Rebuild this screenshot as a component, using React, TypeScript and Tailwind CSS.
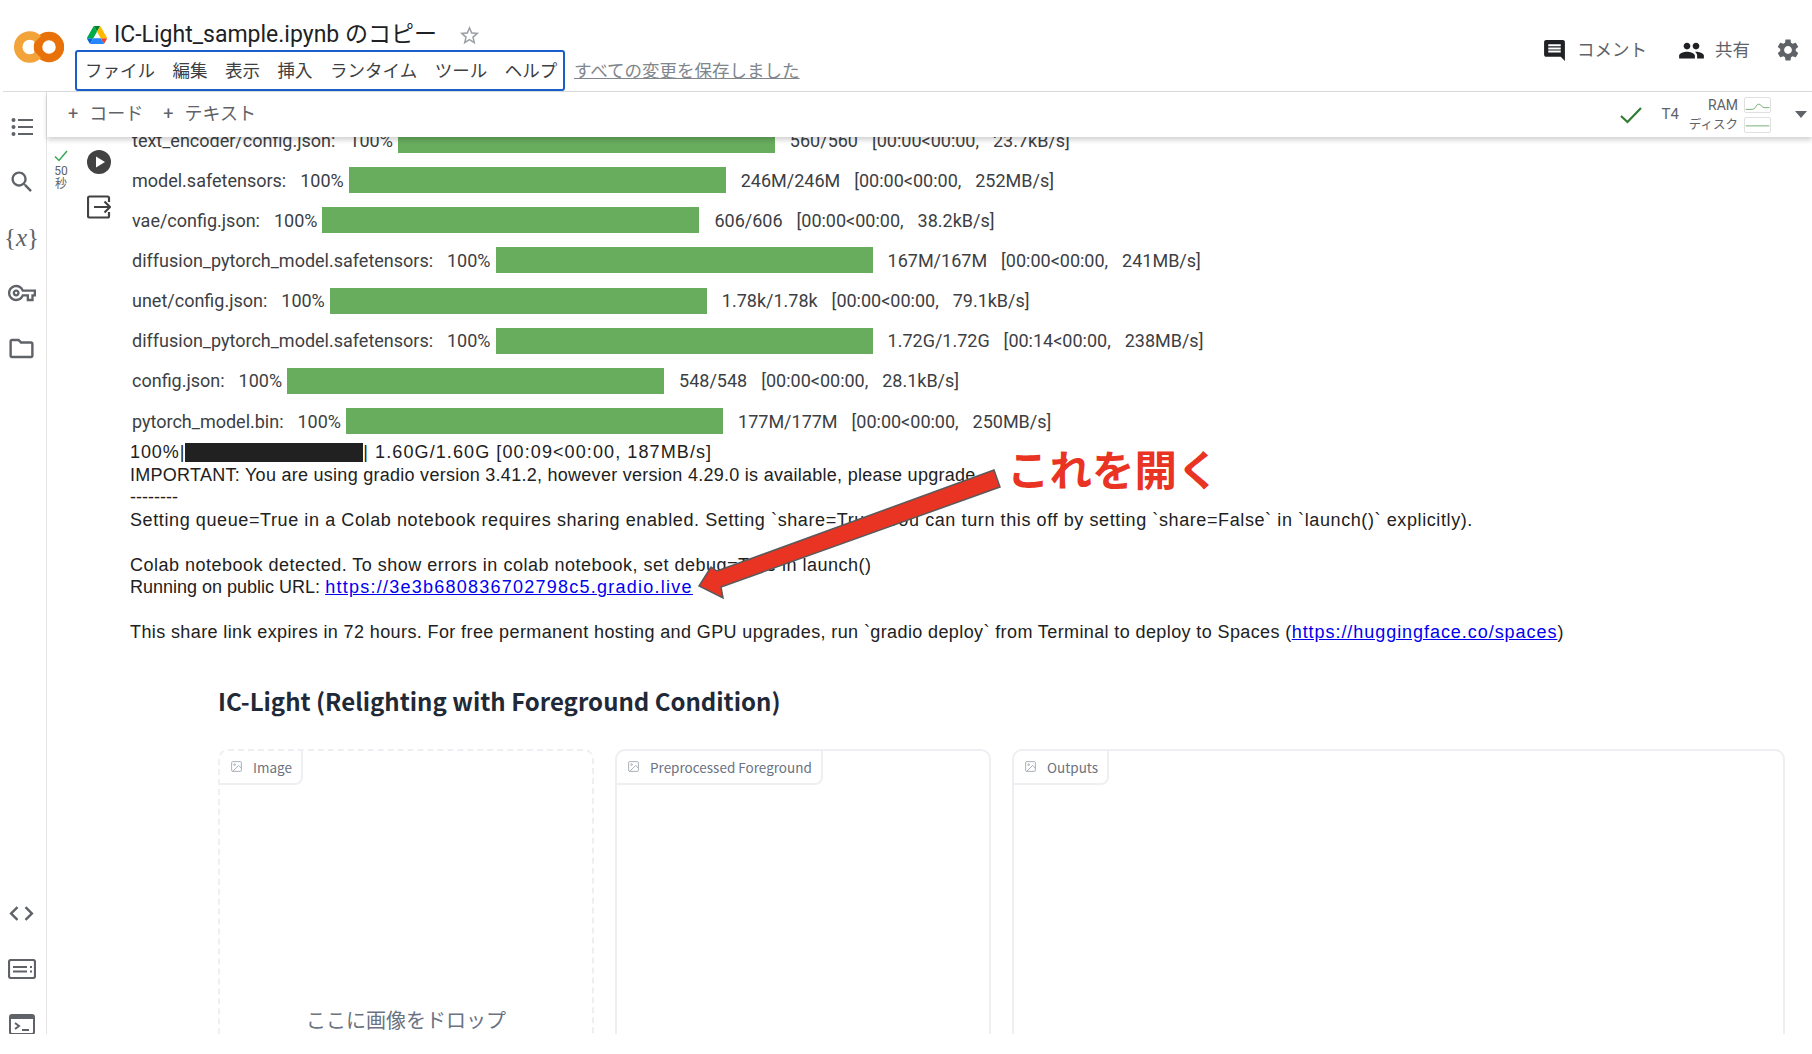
import type { ReactNode } from 'react';

const CJK = "font-['Roboto','Noto_Sans_CJK_JP',sans-serif]";

const rows = [
  { label: 'text_encoder/config.json:', stats: '560/560  [00:00<00:00,  23.7kB/s]' },
  { label: 'model.safetensors:', stats: '246M/246M  [00:00<00:00,  252MB/s]' },
  { label: 'vae/config.json:', stats: '606/606  [00:00<00:00,  38.2kB/s]' },
  { label: 'diffusion_pytorch_model.safetensors:', stats: '167M/167M  [00:00<00:00,  241MB/s]' },
  { label: 'unet/config.json:', stats: '1.78k/1.78k  [00:00<00:00,  79.1kB/s]' },
  { label: 'diffusion_pytorch_model.safetensors:', stats: '1.72G/1.72G  [00:14<00:00,  238MB/s]' },
  { label: 'config.json:', stats: '548/548  [00:00<00:00,  28.1kB/s]' },
  { label: 'pytorch_model.bin:', stats: '177M/177M  [00:00<00:00,  250MB/s]' },
];

function Icon({ d, className }: { d: string; className: string }) {
  return (
    <svg viewBox="0 0 24 24" fill="currentColor" className={className}>
      <path d={d} />
    </svg>
  );
}

function SideItem({ children }: { children: ReactNode }) {
  return <div className="flex h-[55.5px] shrink-0 items-center justify-center text-[#5f6368]">{children}</div>;
}

function ColabLogo() {
  return (
    <svg viewBox="0 0 50 32" className="h-[32px] w-[50px]" fill="none">
      <circle cx="35" cy="16" r="11" stroke="#e8710a" strokeWidth="8.5" />
      <path d="M24 8A11.5 11.5 0 1 0 24 24" stroke="#f2a33a" strokeWidth="8.5" />
    </svg>
  );
}

function DriveLogo() {
  return (
    <svg viewBox="0 0 87.3 78" className="h-[18px] w-[20px]">
      <path d="m6.6 66.85 3.85 6.65c.8 1.4 1.95 2.5 3.3 3.3l13.75-23.8h-27.5c0 1.55.4 3.1 1.2 4.5z" fill="#0066da" />
      <path d="m43.65 25-13.75-23.8c-1.35.8-2.5 1.9-3.3 3.3l-25.4 44a9.06 9.06 0 0 0 -1.2 4.5h27.5z" fill="#00ac47" />
      <path d="m73.55 76.8c1.35-.8 2.5-1.9 3.3-3.3l1.6-2.75 7.65-13.25c.8-1.4 1.2-2.95 1.2-4.5h-27.502l5.852 11.5z" fill="#ea4335" />
      <path d="m43.65 25 13.75-23.8c-1.35-.8-2.9-1.2-4.5-1.2h-18.5c-1.6 0-3.15.45-4.5 1.2z" fill="#00832d" />
      <path d="m59.8 53h-32.3l-13.75 23.8c1.35.8 2.9 1.2 4.5 1.2h50.8c1.6 0 3.15-.45 4.5-1.2z" fill="#2684fc" />
      <path d="m73.4 26.5-12.7-22c-.8-1.4-1.95-2.5-3.3-3.3l-13.75 23.8 16.15 28h27.45c0-1.55-.4-3.1-1.2-4.5z" fill="#ffba00" />
    </svg>
  );
}

function ImageGlyph() {
  return (
    <svg viewBox="0 0 24 24" fill="none" stroke="#9ca3af" strokeWidth="1.6" className="h-[13px] w-[13px] shrink-0">
      <rect x="3" y="3" width="18" height="18" rx="2" />
      <circle cx="8.5" cy="8.5" r="1.5" />
      <path d="M21 15l-5-5L5 21" />
    </svg>
  );
}

function Panel({ label, width, dashed, children }: { label: string; width: string; dashed?: boolean; children?: ReactNode }) {
  return (
    <div className={`relative h-[400px] shrink-0 rounded-t-[10px] border-2 border-[#eeeff3] ${dashed ? 'border-dashed' : ''} ${width}`}>
      <div className="flex h-[34px] w-fit items-center gap-[10px] rounded-br-[8px] border-r-2 border-b-2 border-[#eeeff3] pr-[9px] pl-[10px] font-['Noto_Sans_CJK_JP',sans-serif] text-[13.5px] text-[#6b7280]">
        <ImageGlyph />
        {label}
      </div>
      {children}
    </div>
  );
}

function Spark({ d }: { d: string }) {
  return (
    <svg viewBox="0 0 27 16" className="h-[16px] w-[27px] rounded-[2px] border border-[#e0e0e0]" fill="none">
      <path d={d} stroke="#66a766" strokeWidth="1" />
    </svg>
  );
}

function Header() {
  return (
    <div className="flex h-[92px] shrink-0 border-b border-[#dadce0] pl-[11px]">
      <div className="pt-[31px]">
        <ColabLogo />
      </div>
      <div className="flex min-w-0 flex-col pt-[20px] pl-[11px]">
        <div className="flex h-[30px] items-center pl-[12px]">
          <DriveLogo />
          <span className={`ml-[7px] text-[23px] text-[#202124] ${CJK}`}>IC-Light_sample.ipynb のコピー</span>
          <Icon
            className="ml-[21px] h-[23px] w-[23px] text-[#9aa0a6]"
            d="M22 9.24l-7.19-.62L12 2 9.19 8.63 2 9.24l5.46 4.73L5.82 21 12 17.27 18.18 21l-1.63-7.03L22 9.24zM12 15.4l-3.76 2.27 1-4.28-3.32-2.88 4.38-.38L12 6.1l1.71 4.04 4.38.38-3.32 2.88 1 4.28L12 15.4z"
          />
        </div>
        <div className="flex items-center">
          <div className={`flex h-[41px] w-[490px] items-center gap-[17.5px] rounded-[3px] border-2 border-[#1a5fc9] pt-[1px] pl-[8px] text-[17.5px] whitespace-nowrap text-[#3c4043] ${CJK}`}>
            <span>ファイル</span>
            <span>編集</span>
            <span>表示</span>
            <span>挿入</span>
            <span>ランタイム</span>
            <span>ツール</span>
            <span>ヘルプ</span>
          </div>
          <span className={`ml-[9px] pt-[2px] text-[17.5px] text-[#80868b] underline ${CJK}`}>すべての変更を保存しました</span>
        </div>
      </div>
      <div className={`ml-auto flex h-[100px] items-center pr-[11px] text-[17.5px] text-[#5f6368] ${CJK}`}>
        <Icon
          className="h-[25px] w-[25px] text-[#202124]"
          d="M21.99 4c0-1.1-.89-2-1.99-2H4c-1.1 0-2 .9-2 2v12c0 1.1.9 2 2 2h14l4 4-.01-18zM18 14H6v-2h12v2zm0-3H6V9h12v2zm0-3H6V6h12v2z"
        />
        <span className="ml-[10px]">コメント</span>
        <Icon
          className="ml-[31px] h-[27px] w-[27px] text-[#202124]"
          d="M16 11c1.66 0 2.99-1.34 2.99-3S17.66 5 16 5c-1.66 0-3 1.34-3 3s1.34 3 3 3zm-8 0c1.66 0 2.99-1.34 2.99-3S9.66 5 8 5C6.34 5 5 6.34 5 8s1.34 3 3 3zm0 2c-2.33 0-7 1.17-7 3.5V19h14v-2.5c0-2.33-4.67-3.5-7-3.5zm8 0c-.29 0-.62.02-.97.05 1.16.84 1.97 1.97 1.97 3.45V19h6v-2.5c0-2.33-4.67-3.5-7-3.5z"
        />
        <span className="ml-[10px]">共有</span>
        <Icon
          className="ml-[25px] h-[26px] w-[26px] text-[#5f6368]"
          d="M19.14 12.94c.04-.3.06-.61.06-.94 0-.32-.02-.64-.07-.94l2.03-1.58c.18-.14.23-.41.12-.61l-1.92-3.32c-.12-.22-.37-.29-.59-.22l-2.39.96c-.5-.38-1.03-.7-1.62-.94l-.36-2.54c-.04-.24-.24-.41-.48-.41h-3.84c-.24 0-.43.17-.47.41l-.36 2.54c-.59.24-1.13.57-1.62.94l-2.39-.96c-.22-.08-.47 0-.59.22L2.74 8.87c-.12.21-.08.47.12.61l2.03 1.58c-.05.3-.09.63-.09.94s.02.64.07.94l-2.03 1.58c-.18.14-.23.41-.12.61l1.92 3.32c.12.22.37.29.59.22l2.39-.96c.5.38 1.03.7 1.62.94l.36 2.54c.05.24.24.41.48.41h3.84c.24 0 .44-.17.47-.41l.36-2.54c.59-.24 1.13-.56 1.62-.94l2.39.96c.22.08.47 0 .59-.22l1.92-3.32c.12-.22.07-.47-.12-.61l-2.01-1.58zM12 15.6c-1.98 0-3.6-1.62-3.6-3.6s1.62-3.6 3.6-3.6 3.6 1.62 3.6 3.6-1.62 3.6-3.6 3.6z"
        />
      </div>
    </div>
  );
}

function Sidebar() {
  return (
    <div className="flex w-[44px] shrink-0 flex-col border-r border-[#e4e4e4] pt-[7px] pr-[6px]">
      <SideItem>
        <svg viewBox="0 0 24 24" className="h-[24px] w-[24px]" fill="currentColor">
          <circle cx="3.5" cy="5" r="2" />
          <circle cx="3.5" cy="12" r="2" />
          <circle cx="3.5" cy="19" r="2" />
          <rect x="8" y="4" width="15" height="2" />
          <rect x="8" y="11" width="15" height="2" />
          <rect x="8" y="18" width="15" height="2" />
        </svg>
      </SideItem>
      <SideItem>
        <Icon
          className="h-[28px] w-[28px]"
          d="M15.5 14h-.79l-.28-.27C15.41 12.59 16 11.11 16 9.5 16 5.91 13.09 3 9.5 3S3 5.91 3 9.5 5.91 16 9.5 16c1.61 0 3.09-.59 4.23-1.57l.27.28v.79l5 4.99L20.49 19l-4.99-5zm-6 0C7.01 14 5 11.99 5 9.5S7.01 5 9.5 5 14 7.01 14 9.5 11.99 14 9.5 14z"
        />
      </SideItem>
      <SideItem>
        <span className="font-['Liberation_Serif',serif] text-[25px] whitespace-nowrap">
          {'{'}
          <i>x</i>
          {'}'}
        </span>
      </SideItem>
      <SideItem>
        <Icon
          className="h-[28px] w-[28px]"
          d="M22 19h-6v-4h-2.68c-1.14 2.42-3.6 4-6.32 4-3.86 0-7-3.14-7-7s3.14-7 7-7c2.72 0 5.17 1.58 6.32 4H24v6h-2v4zm-4-2h2v-4h2v-2H11.94l-.23-.67C11.01 8.34 9.11 7 7 7c-2.76 0-5 2.24-5 5s2.24 5 5 5c2.11 0 4.01-1.34 4.71-3.33l.23-.67H18v4zM7 15c-1.65 0-3-1.35-3-3s1.35-3 3-3 3 1.35 3 3-1.35 3-3 3zm0-4c-.55 0-1 .45-1 1s.45 1 1 1 1-.45 1-1-.45-1-1-1z"
        />
      </SideItem>
      <SideItem>
        <Icon
          className="h-[29px] w-[29px]"
          d="M9.17 6l2 2H20v10H4V6h5.17M10 4H4c-1.1 0-1.99.9-1.99 2L2 18c0 1.1.9 2 2 2h16c1.1 0 2-.9 2-2V8c0-1.1-.9-2-2-2h-8l-2-2z"
        />
      </SideItem>
      <div className="mt-auto -mb-[18px] flex flex-col">
        <SideItem>
          <Icon className="h-[29px] w-[29px]" d="M9.4 16.6L4.8 12l4.6-4.6L8 6l-6 6 6 6 1.4-1.4zm5.2 0l4.6-4.6-4.6-4.6L16 6l6 6-6 6-1.4-1.4z" />
        </SideItem>
        <SideItem>
          <svg viewBox="0 0 28 20" className="h-[20px] w-[28px]" fill="none" stroke="currentColor" strokeWidth="2">
            <rect x="1" y="1" width="26" height="18" rx="2" strokeWidth="2.2" />
            <path d="M5 8h14M5 12.5h14M22 8h2M22 12.5h2" />
          </svg>
        </SideItem>
        <SideItem>
          <svg viewBox="0 0 26 21" className="h-[21px] w-[26px]" fill="none" stroke="currentColor" strokeWidth="2">
            <rect x="1" y="1" width="24" height="19" rx="2" />
            <path d="M1 3h24" strokeWidth="4" />
            <path d="M6 9l4 3-4 3M13 16h7" />
          </svg>
        </SideItem>
      </div>
    </div>
  );
}

function Toolbar() {
  return (
    <div className="relative z-10 flex h-[45px] shrink-0 items-center bg-white pr-[5px] shadow-[0_3px_5px_rgba(0,0,0,0.18)]">
      <div className={`flex items-center pb-[2px] pl-[21px] text-[18px] text-[#5f6368] ${CJK}`}>
        <span>+</span>
        <span className="ml-[11px]">コード</span>
        <span className="ml-[20px]">+</span>
        <span className="ml-[11px]">テキスト</span>
      </div>
      <div className="ml-auto flex items-center">
        <svg viewBox="0 0 24 24" className="h-[24px] w-[24px]" fill="none" stroke="#2e7d32" strokeWidth="2.2">
          <path d="M2 13l6.5 6L22 5" />
        </svg>
        <span className="ml-[18px] font-['Roboto',sans-serif] text-[15px] text-[#5f6368]">T4</span>
        <div className={`ml-[10px] flex flex-col items-end gap-[4px] text-[14px] leading-[16px] text-[#5f6368] ${CJK}`}>
          <div className="flex items-center gap-[6px]">
            RAM
            <Spark d="M0 13 H8 C11 13 12 7 15 7 C18 7 18 11 21 11 H27" />
          </div>
          <div className="flex items-center gap-[6px] text-[12.5px]">
            ディスク
            <Spark d="M0 9 H27" />
          </div>
        </div>
        <div className="ml-[24px] h-0 w-0 border-x-[6px] border-t-[7px] border-x-transparent border-t-[#5f6368]" />
      </div>
    </div>
  );
}

function Gutter() {
  return (
    <div className="flex w-[83px] shrink-0">
      <div className="flex w-[26px] flex-col items-center pt-[13px] pl-[2px] font-['Roboto','Noto_Sans_CJK_JP',sans-serif] text-[12px] leading-[13px] text-[#5f6368]">
        <svg viewBox="0 0 14 12" className="mb-[3px] h-[12px] w-[14px]" fill="none" stroke="#34a853" strokeWidth="1.5">
          <path d="M1 6.5l4 4L13 1" />
        </svg>
        <span>50</span>
        <span>秒</span>
      </div>
      <div className="flex flex-col items-start pt-[13px] pl-[14px]">
        <svg viewBox="0 0 24 24" className="h-[24px] w-[24px]">
          <circle cx="12" cy="12" r="12" fill="#424242" />
          <path d="M9 6.5l9 5.5-9 5.5z" fill="#fff" />
        </svg>
        <svg viewBox="0 0 24 24" className="mt-[21px] h-[24px] w-[24px]" fill="none" stroke="#424242" strokeWidth="2.2">
          <path d="M22 7V3a1.5 1.5 0 0 0-1.5-1.5h-18A1.5 1.5 0 0 0 1 3v18a1.5 1.5 0 0 0 1.5 1.5h18A1.5 1.5 0 0 0 22 21v-4" />
          <path d="M7 12h16M17.5 6.5L23 12l-5.5 5.5" />
        </svg>
      </div>
    </div>
  );
}

function Output() {
  return (
    <div className="min-w-0 flex-1 -mt-[17px]">
      <div className="pl-[2px] font-['Roboto',sans-serif] text-[18px] [word-spacing:2.5px] text-[#3c4043]">
        {rows.map((r, i) => (
          <div key={i} className="flex h-[40.15px] items-center whitespace-pre">
            <span>{r.label}  100%</span>
            <div className="mr-[15px] ml-[5px] h-[26px] w-[377px] bg-[#68ac5e]" />
            <span>{r.stats}</span>
          </div>
        ))}
      </div>
      <div className="font-['Liberation_Sans',sans-serif] text-[18px] leading-[22.5px] whitespace-pre text-[#212121]">
        <div className="flex items-center">
          <span className="tracking-[0.9px]">100%|</span>
          <span className="h-[19px] w-[178px] bg-[#212121]" />
          <span className="tracking-[1.1px]">| 1.60G/1.60G [00:09&lt;00:00, 187MB/s]</span>
        </div>
        <div className="tracking-[0.27px]">IMPORTANT: You are using gradio version 3.41.2, however version 4.29.0 is available, please upgrade.</div>
        <div>--------</div>
        <div className="tracking-[0.6px]">Setting queue=True in a Colab notebook requires sharing enabled. Setting `share=True` You can turn this off by setting `share=False` in `launch()` explicitly).</div>
        <div>&nbsp;</div>
        <div className="tracking-[0.5px]">Colab notebook detected. To show errors in colab notebook, set debug=True in launch()</div>
        <div>
          Running on public URL: <span className="tracking-[1.25px] text-[#0000ee] underline">https://3e3b680836702798c5.gradio.live</span>
        </div>
        <div>&nbsp;</div>
        <div className="tracking-[0.39px]">
          This share link expires in 72 hours. For free permanent hosting and GPU upgrades, run `gradio deploy` from Terminal to deploy to Spaces (
          <span className="tracking-[0.95px] text-[#0000ee] underline">https://huggingface.co/spaces</span>)
        </div>
      </div>
      <div className="pt-[40px] pl-[88px]">
        <h1 className="font-['Noto_Sans_CJK_JP',sans-serif] text-[24px] leading-[34px] font-bold text-[#1f2937]">
          IC-Light (Relighting with Foreground Condition)
        </h1>
        <div className="mt-[31px] flex gap-[21px]">
          <Panel label="Image" width="w-[376px]" dashed>
            <div className="mt-[220px] text-center font-['Noto_Sans_CJK_JP',sans-serif] text-[20px] text-[#6b7280]">ここに画像をドロップ</div>
          </Panel>
          <Panel label="Preprocessed Foreground" width="w-[376px]" />
          <Panel label="Outputs" width="w-[773px]" />
        </div>
      </div>
    </div>
  );
}

function Annotation() {
  return (
    <>
      <svg viewBox="0 0 1812 1054" className="pointer-events-none absolute inset-0 z-20 h-[1054px] w-[1812px]">
        <polygon
          points="994,470 1000,487 721,587 723,598 699,586 711,567 717,571"
          fill="#e93323"
          stroke="#5a5a5a"
          strokeWidth="1.5"
        />
      </svg>
      <div className="absolute top-[438px] left-[1007px] z-20 font-['Noto_Sans_CJK_JP',sans-serif] text-[42.5px] leading-[60px] font-bold text-[#e93323]">
        これを開く
      </div>
    </>
  );
}

export default function App() {
  return (
    <div className="relative h-[1054px] w-[1812px] overflow-hidden bg-white">
      <div className="flex h-[1034px] flex-col overflow-hidden pl-[3px]">
        <Header />
        <div className="flex min-h-0 flex-1">
          <Sidebar />
          <div className="flex min-w-0 flex-1 flex-col">
            <Toolbar />
            <div className="flex min-h-0 flex-1 overflow-hidden">
              <Gutter />
              <Output />
            </div>
          </div>
        </div>
      </div>
      <Annotation />
    </div>
  );
}
